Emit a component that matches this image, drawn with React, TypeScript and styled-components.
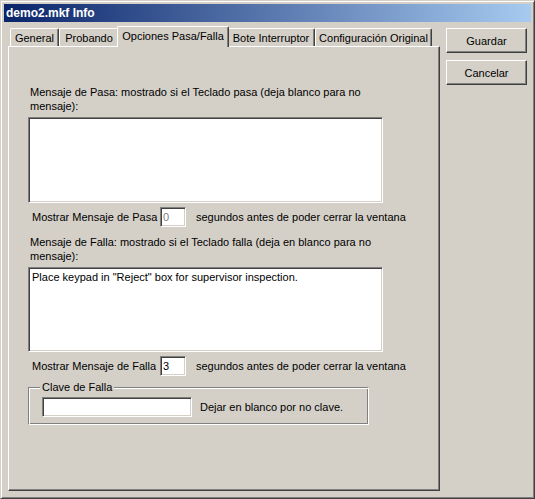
import React from "react";
import styled, { createGlobalStyle } from "styled-components";

const Global = createGlobalStyle`
  html, body { margin: 0; padding: 0; background: #d4d0c8; }
  body { font-family: "Liberation Sans", Arial, sans-serif; font-size: 11px; color: #000; }
  * { box-sizing: border-box; }
`;

const Window = styled.div`
  width: 535px;
  height: 499px;
  background: #d4d0c8;
  border: 1px solid;
  border-color: #d4d0c8 #404040 #404040 #d4d0c8;
  box-shadow: inset 1px 1px #ffffff, inset -1px -1px #808080;
  padding: 3px;
  display: flex;
  flex-direction: column;
`;

const TitleBar = styled.div`
  height: 18px;
  background: linear-gradient(to right, #0a246a, #a6caf0);
  color: #fff;
  font-weight: bold;
  font-size: 12px;
  line-height: 18px;
  padding-left: 2px;
  white-space: nowrap;
`;

const Body = styled.div`
  display: flex;
  padding: 4px 0 0 4px;
  gap: 6px;
`;

const TabControl = styled.div`
  width: 432px;
  display: flex;
  flex-direction: column;
`;

const TabStrip = styled.div`
  height: 20px;
  display: flex;
  align-items: flex-end;
  padding-left: 2px;
  position: relative;
  z-index: 1;
`;

const Tab = styled.div<{ $w: number; $active?: boolean }>`
  width: ${(p) => p.$w}px;
  height: ${(p) => (p.$active ? 21 : 18)}px;
  margin: ${(p) => (p.$active ? "0 -2px -1px -2px" : "0")};
  padding: ${(p) => (p.$active ? "0 2px" : "0")};
  background: #d4d0c8;
  border-top: 1px solid #ffffff;
  border-left: 1px solid #ffffff;
  border-right: 1px solid #404040;
  border-top-left-radius: 2px;
  border-top-right-radius: 2px;
  box-shadow: inset -1px 0 #808080;
  display: flex;
  justify-content: center;
  align-items: ${(p) => (p.$active ? "flex-start" : "center")};
  padding-top: ${(p) => (p.$active ? "3px" : "0")};
  white-space: nowrap;
  position: relative;
  z-index: ${(p) => (p.$active ? 2 : 1)};
`;

const Panel = styled.div`
  height: 445px;
  border: 1px solid;
  border-color: #ffffff #404040 #404040 #ffffff;
  box-shadow: inset -1px -1px #808080;
  padding: 38px 0 0 19px;
  display: flex;
  flex-direction: column;
  align-items: flex-start;
`;

const Label = styled.div<{ $mt?: number }>`
  margin-top: ${(p) => p.$mt ?? 0}px;
  padding-left: 2px;
  line-height: 14px;
  white-space: nowrap;
`;

const MessageBox = styled.textarea<{ $h: number }>`
  margin-top: 4px;
  width: 355px;
  height: ${(p) => p.$h}px;
  resize: none;
  background: #fff;
  border: 1px solid;
  border-color: #808080 #ffffff #ffffff #808080;
  box-shadow: inset 1px 1px #404040, inset -1px -1px #d4d0c8;
  padding: 2px 3px;
  font-family: "Liberation Sans", Arial, sans-serif;
  font-size: 11px;
  line-height: 14px;
  color: #000;
  outline: none;
  overflow: hidden;
`;

const SecondsRow = styled.div`
  margin-top: 4px;
  height: 20px;
  display: flex;
  align-items: center;
  padding-left: 4px;
  white-space: nowrap;
`;

const RowLabel = styled.span`
  width: 128px;
`;

const Field = styled.input<{ $w: number; $dim?: boolean }>`
  width: ${(p) => p.$w}px;
  height: 20px;
  background: #fff;
  border: 1px solid;
  border-color: #808080 #ffffff #ffffff #808080;
  box-shadow: inset 1px 1px #404040, inset -1px -1px #d4d0c8;
  padding: 0 2px;
  font-family: "Liberation Sans", Arial, sans-serif;
  font-size: 11px;
  color: ${(p) => (p.$dim ? "#808080" : "#000")};
  outline: none;
  flex: none;
`;

const RowTail = styled.span`
  margin-left: 10px;
`;

const GroupBox = styled.fieldset`
  margin: 4px 0 0 0;
  width: 341px;
  padding: 0 0 7px 13px;
  border: 1px solid;
  border-color: #808080 #ffffff #ffffff #808080;
  box-shadow: inset 1px 1px #ffffff, inset -1px -1px #808080;
  min-inline-size: 0;
`;

const Legend = styled.legend`
  margin-left: -2px;
  padding: 0 2px;
  line-height: 14px;
  background: #d4d0c8;
`;

const GroupRow = styled.div`
  margin-top: 3px;
  display: flex;
  align-items: center;
  gap: 8px;
  white-space: nowrap;
`;

const ButtonColumn = styled.div`
  margin-top: 2px;
  display: flex;
  flex-direction: column;
  gap: 7px;
`;

const Button = styled.button`
  width: 81px;
  height: 25px;
  background: #d4d0c8;
  border: 1px solid;
  border-color: #ffffff #404040 #404040 #ffffff;
  box-shadow: inset -1px -1px #808080;
  font-family: "Liberation Sans", Arial, sans-serif;
  font-size: 11px;
  color: #000;
  padding: 0;
`;

const tabs = [
  { label: "General", w: 49 },
  { label: "Probando", w: 60 },
  { label: "Opciones Pasa/Falla", w: 108, active: true },
  { label: "Bote Interruptor", w: 88 },
  { label: "Configuración Original", w: 117 },
];

export default function App() {
  return (
    <>
      <Global />
      <Window>
        <TitleBar>demo2.mkf Info</TitleBar>
        <Body>
          <TabControl>
            <TabStrip>
              {tabs.map((t) => (
                <Tab key={t.label} $w={t.w + (t.active ? 4 : 0)} $active={t.active}>
                  {t.label}
                </Tab>
              ))}
            </TabStrip>
            <Panel>
              <Label>
                Mensaje de Pasa: mostrado si el Teclado pasa (deja blanco para no
                <br />
                mensaje):
              </Label>
              <MessageBox $h={86} readOnly defaultValue="" />
              <SecondsRow>
                <RowLabel>Mostrar Mensaje de Pasa</RowLabel>
                <Field $w={26} $dim readOnly value="0" />
                <RowTail>segundos antes de poder cerrar la ventana</RowTail>
              </SecondsRow>
              <Label $mt={8}>
                Mensaje de Falla: mostrado si el Teclado falla (deja en blanco para no
                <br />
                mensaje):
              </Label>
              <MessageBox
                $h={85}
                readOnly
                defaultValue={'Place keypad in "Reject" box for supervisor inspection.'}
              />
              <SecondsRow>
                <RowLabel>Mostrar Mensaje de Falla</RowLabel>
                <Field $w={26} readOnly value="3" />
                <RowTail>segundos antes de poder cerrar la ventana</RowTail>
              </SecondsRow>
              <GroupBox>
                <Legend>Clave de Falla</Legend>
                <GroupRow>
                  <Field $w={150} readOnly value="" />
                  <span>Dejar en blanco por no clave.</span>
                </GroupRow>
              </GroupBox>
            </Panel>
          </TabControl>
          <ButtonColumn>
            <Button>Guardar</Button>
            <Button>Cancelar</Button>
          </ButtonColumn>
        </Body>
      </Window>
    </>
  );
}
